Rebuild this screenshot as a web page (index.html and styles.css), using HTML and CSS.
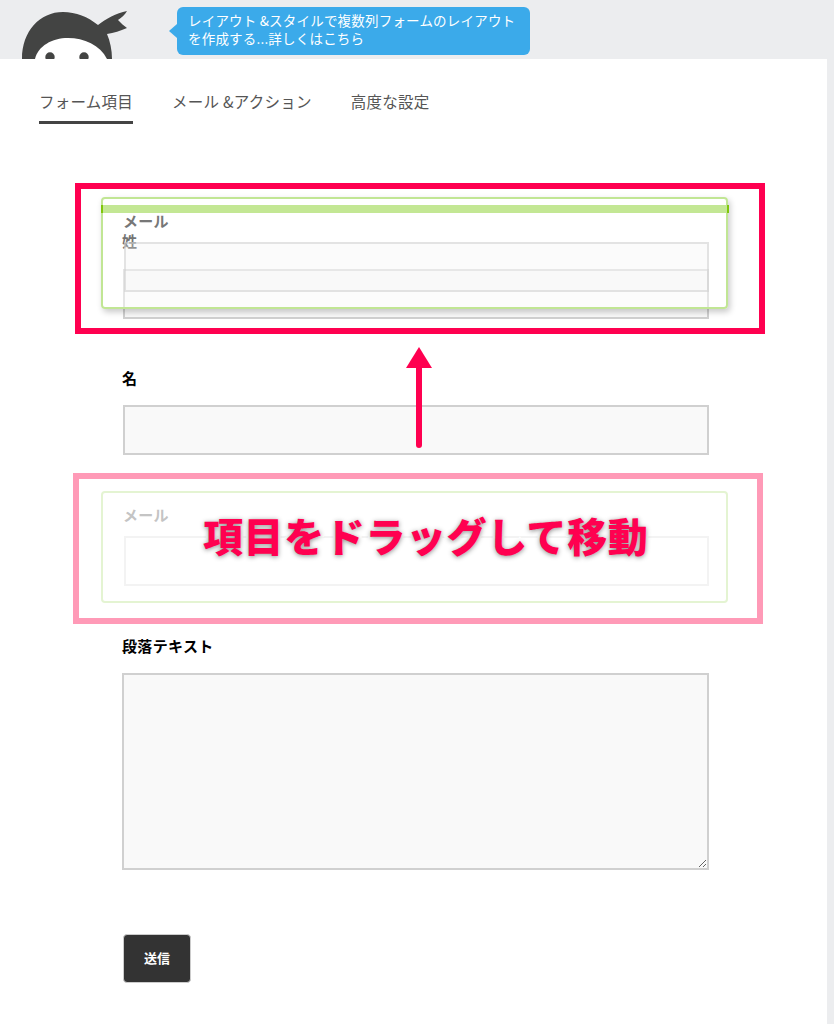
FILE: index.html
```html
<!DOCTYPE html>
<html lang="ja">
<head>
  <meta charset="UTF-8">
  <title>フォーム項目</title>
  <link rel="stylesheet" href="styles.css">
</head>
<body>
  <header class="top">
    <svg class="logo" width="177" height="59" viewBox="0 0 177 59">
      <path class="logo-dark" d="M22 59C22 31 40 12 63 12C76 12 88 17 98 25C106 19 116 13 127 11C125 15 121 18 118 20C121 23 124 26 127 28C120 31 114 33 107 34C110 41 112 50 112 59Z"/>
      <path class="logo-white" d="M35 59C38 46 52 38 68 38C84 38 100 45 107 59Z"/>
      <circle class="logo-dark" cx="50" cy="57" r="4.7"/>
      <circle class="logo-dark" cx="84" cy="57" r="4.7"/>
    </svg>
    <div class="bubble">レイアウト &amp;スタイルで複数列フォームのレイアウトを作成する...詳しくはこちら</div>
  </header>

  <main class="panel">
    <nav class="tabs">
      <a href="#" class="tab active">フォーム項目</a>
      <a href="#" class="tab">メール &amp;アクション</a>
      <a href="#" class="tab">高度な設定</a>
    </nav>

    <form class="form">
      <div class="field field-first">
        <label class="label">姓</label>
        <input class="input" type="text">
      </div>
      <div class="field">
        <label class="label">名</label>
        <input class="input" type="text">
      </div>
      <div class="drop-slot">
        <div class="slot-label">メール</div>
        <div class="slot-input"></div>
      </div>
      <div class="field field-text">
        <label class="label">段落テキスト</label>
        <textarea class="textarea"></textarea>
      </div>
      <button class="submit" type="button">送信</button>
    </form>

    <!-- ドラッグ中の項目 -->
    <div class="drag-card">
      <div class="drag-bar"></div>
      <div class="slot-label">メール</div>
      <div class="drag-input"></div>
    </div>

    <!-- 注釈 -->
    <div class="frame frame-to"></div>
    <div class="frame frame-from"></div>
    <svg class="arrow" width="30" height="106" viewBox="0 0 30 106">
      <path d="M15 0L28 21H2Z"/>
      <line x1="15" y1="18" x2="15" y2="98"/>
    </svg>
    <div class="note">項目をドラッグして移動</div>
  </main>
</body>
</html>
```

FILE: styles.css
```css
* {
  box-sizing: border-box;
}
body {
  margin: 0;
  background-color: #ecedef;
  font-family: "Noto Sans CJK JP", sans-serif;
  overflow: hidden;
}
.top {
  display: flex;
  height: 59px;
  overflow: hidden;
}
.logo {
  flex: none;
}
.logo-dark {
  fill: #434443;
}
.logo-white {
  fill: #fff;
}
.bubble {
  position: relative;
  width: 353px;
  height: 48px;
  margin-top: 7px;
  padding: 4px 11px;
  background-color: #3baaea;
  border-radius: 6px;
  color: #fff;
  font-size: 13.5px;
  line-height: 18px;
  letter-spacing: .2px;
}
.bubble::before {
  content: "";
  position: absolute;
  left: -8px;
  top: 17px;
  border-top: 7px solid transparent;
  border-bottom: 7px solid transparent;
  border-right: 8px solid #3baaea;
}
.panel {
  position: relative;
  width: 827px;
  height: 965px;
  background-color: #fff;
}
.tabs {
  display: flex;
  gap: 39px;
  padding: 30px 0 0 39px;
}
.tab {
  height: 35px;
  color: #555;
  font-size: 15.5px;
  letter-spacing: .25px;
  line-height: 24px;
  text-decoration: none;
}
.tab.active {
  border-bottom: 3px solid #444;
}
.form {
  padding: 106px 118px 0 123px;
}
.field {
  margin-bottom: 49px;
}
.field-first {
  margin-bottom: 48px;
}
.field-first .label {
  margin-bottom: 17px;
}
.label {
  display: block;
  height: 22px;
  margin: 0 0 16px -1px;
  color: #000;
  font-size: 15px;
  font-weight: 700;
  letter-spacing: .35px;
  line-height: 22px;
}
.input {
  display: block;
  width: 586px;
  height: 50px;
  background-color: #f9f9f9;
  border: 2px solid #d0d0d0;
  border-radius: 0;
}
.drop-slot {
  width: 627px;
  height: 112px;
  margin: -13px 0 32px -22px;
  padding: 11px 20px 0 21px;
  border: 2px solid #e4f4d2;
  border-radius: 4px;
}
.slot-label {
  height: 22px;
  margin-left: -1px;
  color: #c4c4c4;
  font-size: 15px;
  font-weight: 700;
  letter-spacing: .3px;
  line-height: 22px;
}
.slot-input {
  width: 585px;
  height: 50px;
  margin-top: 10px;
  border: 2px solid #f3f3f3;
}
.field-text {
  margin-bottom: 64px;
}
.textarea {
  display: block;
  width: 587px;
  height: 197px;
  margin-left: -1px;
  background-color: #f9f9f9;
  border: 2px solid #d0d0d0;
  border-radius: 0;
}
.submit {
  display: block;
  width: 68px;
  height: 49px;
  padding: 0 0 2px;
  background-color: #333;
  border: 1px solid #ccc;
  border-radius: 4px;
  color: #fff;
  font-family: inherit;
  font-size: 13px;
  font-weight: 700;
}
.drag-card {
  position: absolute;
  left: 101px;
  top: 138px;
  width: 627px;
  height: 112px;
  padding: 11px 21px 0;
  background-color: rgba(255, 255, 255, .45);
  border: 2px solid #c1e694;
  border-radius: 4px;
  box-shadow: 2px 3px 6px rgba(0, 0, 0, .22);
}
.drag-card .slot-label {
  color: #777;
}
.drag-bar {
  position: absolute;
  left: -2px;
  right: -3px;
  top: 6px;
  height: 8px;
  background-color: #c3e794;
  border-left: 2px solid #7fc60a;
  border-right: 2px solid #7fc60a;
}
.drag-input {
  width: 585px;
  height: 50px;
  margin-top: 10px;
  background-color: rgba(240, 240, 240, .25);
  border: 2px solid rgba(204, 204, 204, .5);
}
.frame {
  position: absolute;
  width: 690px;
  height: 151px;
  pointer-events: none;
}
.frame-to {
  left: 75px;
  top: 124px;
  border: 6px solid #ff0050;
}
.frame-from {
  left: 73px;
  top: 414px;
  border: 6px solid #ff9ab7;
}
.arrow {
  position: absolute;
  left: 404px;
  top: 288px;
}
.arrow path {
  fill: #ff0050;
}
.arrow line {
  stroke: #ff0050;
  stroke-width: 6;
  stroke-linecap: round;
}
.note {
  position: absolute;
  left: 203px;
  top: 447px;
  color: #ff0050;
  font-size: 40px;
  font-weight: 900;
  letter-spacing: .6px;
  line-height: 58px;
  white-space: nowrap;
  -webkit-text-stroke: 5px #fff;
  paint-order: stroke fill;
  text-shadow: 0 1px 5px rgba(0, 0, 0, .45);
}
```
